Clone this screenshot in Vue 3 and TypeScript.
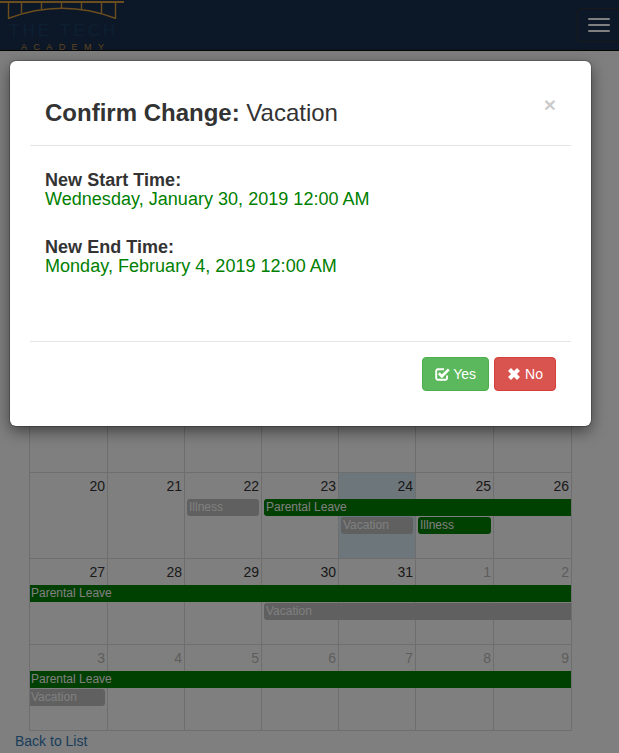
<script setup lang="ts">
interface Day { n: number; muted?: boolean; today?: boolean }
interface Ev { title: string; row: number; start: number; span: number; kind: 'green' | 'gray'; contL?: boolean; contR?: boolean }
interface Week { days: Day[]; events: Ev[] }

function days(list: number[], today = -1, mutedFrom = 99, mutedTo = -1): Day[] {
  return list.map((n, i) => ({ n, today: i === today, muted: i >= mutedFrom || i <= mutedTo }))
}

const weeks: Week[] = [
  { days: days([30, 31, 1, 2, 3, 4, 5], -1, 99, 1), events: [] },
  { days: days([6, 7, 8, 9, 10, 11, 12]), events: [] },
  { days: days([13, 14, 15, 16, 17, 18, 19]), events: [] },
  {
    days: days([20, 21, 22, 23, 24, 25, 26], 4),
    events: [
      { title: 'Illness', row: 2, start: 3, span: 1, kind: 'gray' },
      { title: 'Parental Leave', row: 2, start: 4, span: 4, kind: 'green', contR: true },
      { title: 'Vacation', row: 3, start: 5, span: 1, kind: 'gray' },
      { title: 'Illness', row: 3, start: 6, span: 1, kind: 'green' },
    ],
  },
  {
    days: days([27, 28, 29, 30, 31, 1, 2], -1, 5),
    events: [
      { title: 'Parental Leave', row: 2, start: 1, span: 7, kind: 'green', contL: true, contR: true },
      { title: 'Vacation', row: 3, start: 4, span: 4, kind: 'gray', contR: true },
    ],
  },
  {
    days: days([3, 4, 5, 6, 7, 8, 9], -1, 0),
    events: [
      { title: 'Parental Leave', row: 2, start: 1, span: 7, kind: 'green', contL: true, contR: true },
      { title: 'Vacation', row: 3, start: 1, span: 1, kind: 'gray', contL: true },
    ],
  },
]
</script>

<template>
  <div class="page">
    <header class="nav">
      <a class="logo" href="#">
        <svg class="bridge" width="124" height="20" viewBox="0 0 124 20" fill="none" stroke="#d99a3c" stroke-width="1.4">
          <path d="M0 2H124" stroke-width="2" />
          <path d="M8.500 2V18.500M21.500 2V13M41.500 2V9M61.500 2V8M81.500 2V9M101.500 2V13M115.500 2V18.500" />
          <path d="M8 18.500Q62 -2 116 18.500" />
        </svg>
        <span class="logo-main">THE TECH</span>
        <span class="logo-sub">ACADEMY</span>
      </a>
      <button class="toggle" type="button" aria-label="Menu">
        <span></span><span></span><span></span>
      </button>
    </header>

    <main class="main">
      <div class="calendar">
        <div v-for="(week, w) in weeks" :key="w" class="week">
          <div v-for="(day, d) in week.days" :key="d" class="cell" :class="{ today: day.today, muted: day.muted }" :style="{ gridColumn: d + 1 }">
            {{ day.n }}
          </div>
          <div
            v-for="(ev, e) in week.events"
            :key="e"
            class="event"
            :class="[ev.kind, { 'cont-l': ev.contL, 'cont-r': ev.contR }]"
            :style="{ gridRow: ev.row, gridColumn: `${ev.start} / span ${ev.span}` }"
          >
            {{ ev.title }}
          </div>
        </div>
      </div>
      <a class="back" href="#">Back to List</a>
    </main>

    <div class="backdrop"></div>

    <section class="modal" role="dialog">
      <div class="modal-header">
        <h4 class="modal-title"><strong>Confirm Change:</strong> Vacation</h4>
        <button class="close" type="button" aria-label="Close">×</button>
      </div>
      <div class="modal-body">
        <div class="field">
          <strong>New Start Time:</strong>
          <span class="value">Wednesday, January 30, 2019 12:00 AM</span>
        </div>
        <div class="field">
          <strong>New End Time:</strong>
          <span class="value">Monday, February 4, 2019 12:00 AM</span>
        </div>
      </div>
      <div class="modal-footer">
        <button class="btn yes" type="button">
          <svg width="15" height="14" viewBox="0 0 15 14" fill="none" stroke="#fff">
            <path d="M12 8.500V11a1.800 1.800 0 0 1-1.800 1.800H3A1.800 1.800 0 0 1 1.200 11V4A1.800 1.800 0 0 1 3 2.200H9" stroke-width="1.900" />
            <path d="M3.800 6.200L6.900 9.300L13.800 2.400" stroke-width="2.700" />
          </svg>
          Yes
        </button>
        <button class="btn no" type="button">
          <svg width="14" height="14" viewBox="0 0 14 14" fill="none" stroke="#fff" stroke-width="4.200">
            <path d="M2.500 2.500L11.500 11.500M11.500 2.500L2.500 11.500" />
          </svg>
          No
        </button>
      </div>
    </section>
  </div>
</template>

<style>
html, body { margin: 0; height: 100%; overflow: hidden; background: #fff; }
</style>

<style scoped>
.page {
  position: relative;
  height: 753px;
  overflow: hidden;
  font-family: "Liberation Sans", Arial, sans-serif;
  font-size: 14px;
  color: #333;
}
.nav {
  display: flex;
  justify-content: space-between;
  height: 50px;
  background: #18304f;
  border-bottom: 1px solid #080808;
  overflow: hidden;
}
.logo {
  display: flex;
  flex-direction: column;
  width: 124px;
  text-decoration: none;
}
.bridge { flex: none; display: block; }
.logo-main {
  margin: 3px 0 0 9px;
  font-size: 17px;
  line-height: 16px;
  letter-spacing: 3.100px;
  white-space: nowrap;
  color: #1b3f66;
}
.logo-sub {
  margin: 3px 0 0 21px;
  font-size: 9px;
  line-height: 10px;
  letter-spacing: 6.400px;
  white-space: nowrap;
  color: #bc8a40;
}
.toggle {
  flex: none;
  box-sizing: border-box;
  display: flex;
  flex-direction: column;
  gap: 4px;
  width: 44px;
  height: 34px;
  margin: 8px -2px 0 0;
  padding: 9px 10px;
  background: transparent;
  border: 1px solid #333;
  border-radius: 4px;
}
.toggle span { display: block; width: 22px; height: 2px; flex: none; background: #fff; border-radius: 1px; }
.main { padding: 163px 15px 0; }
.calendar {
  box-sizing: border-box;
  width: 543px;
  margin-left: 14px;
  border-right: 1px solid #ddd;
  border-bottom: 1px solid #ddd;
}
.week {
  display: grid;
  grid-template-columns: 78px 77px 77px 77px 77px 78px 78px;
  grid-template-rows: 27px 18px 18px 1fr;
  height: 86px;
}
.cell {
  grid-row: 1 / -1;
  box-sizing: border-box;
  padding: 3px 2px 0 0;
  border-top: 1px solid #ddd;
  border-left: 1px solid #ddd;
  text-align: right;
  line-height: 20px;
}
.cell.today { background: #d9edf7; }
.cell.muted { color: #bbb; }
.event {
  height: 17px;
  margin: 0 2px 0 3px;
  padding-left: 2px;
  border-radius: 3px;
  font-size: 12px;
  line-height: 16px;
  color: #fff;
  white-space: nowrap;
}
.event.green { background: #008000; }
.event.gray { background: #c0c0c0; }
.event.cont-l { margin-left: 1px; padding-left: 1px; border-top-left-radius: 0; border-bottom-left-radius: 0; }
.event.cont-r { margin-right: 0; border-top-right-radius: 0; border-bottom-right-radius: 0; }
.back {
  display: block;
  line-height: 20px;
  color: #337ab7;
  text-decoration: none;
}
.backdrop { position: absolute; inset: 0; background: #000; opacity: 0.5; }
.modal {
  position: absolute;
  top: 61px;
  left: 10px;
  box-sizing: border-box;
  width: 581px;
  height: 365px;
  padding: 0 20px;
  background: #fff;
  border-radius: 6px;
  box-shadow: 0 0 0 1px rgba(0, 0, 0, 0.2), 0 5px 15px rgba(0, 0, 0, 0.5);
}
.modal-header {
  display: flex;
  justify-content: space-between;
  align-items: flex-start;
  height: 85px;
  box-sizing: border-box;
  padding: 35px 15px 0;
  border-bottom: 1px solid #e5e5e5;
}
.modal-title { margin: 0; font-size: 24px; line-height: 34px; font-weight: 400; }
.close {
  padding: 0;
  margin-top: -2px;
  border: 0;
  background: none;
  font-family: inherit;
  font-size: 21px;
  font-weight: 700;
  line-height: 21px;
  color: #000;
  opacity: 0.2;
}
.modal-body {
  box-sizing: border-box;
  height: 195px;
  padding: 24px 15px 0;
  font-size: 18px;
  line-height: 20px;
  letter-spacing: 0.030px;
}
.field { margin-bottom: 28px; }
.field strong { display: block; }
.field .value { display: block; line-height: 19px; color: #008000; }
.modal-footer {
  display: flex;
  justify-content: flex-end;
  gap: 5px;
  padding: 15px;
  border-top: 1px solid #e5e5e5;
}
.btn {
  display: inline-flex;
  align-items: center;
  gap: 3px;
  box-sizing: border-box;
  height: 34px;
  padding: 0 12px;
  border: 1px solid transparent;
  border-radius: 4px;
  font-family: inherit;
  font-size: 14px;
  color: #fff;
}
.btn.yes { background: #5cb85c; border-color: #4cae4c; }
.btn.no { gap: 4px; background: #d9534f; border-color: #d43f3a; }
</style>
